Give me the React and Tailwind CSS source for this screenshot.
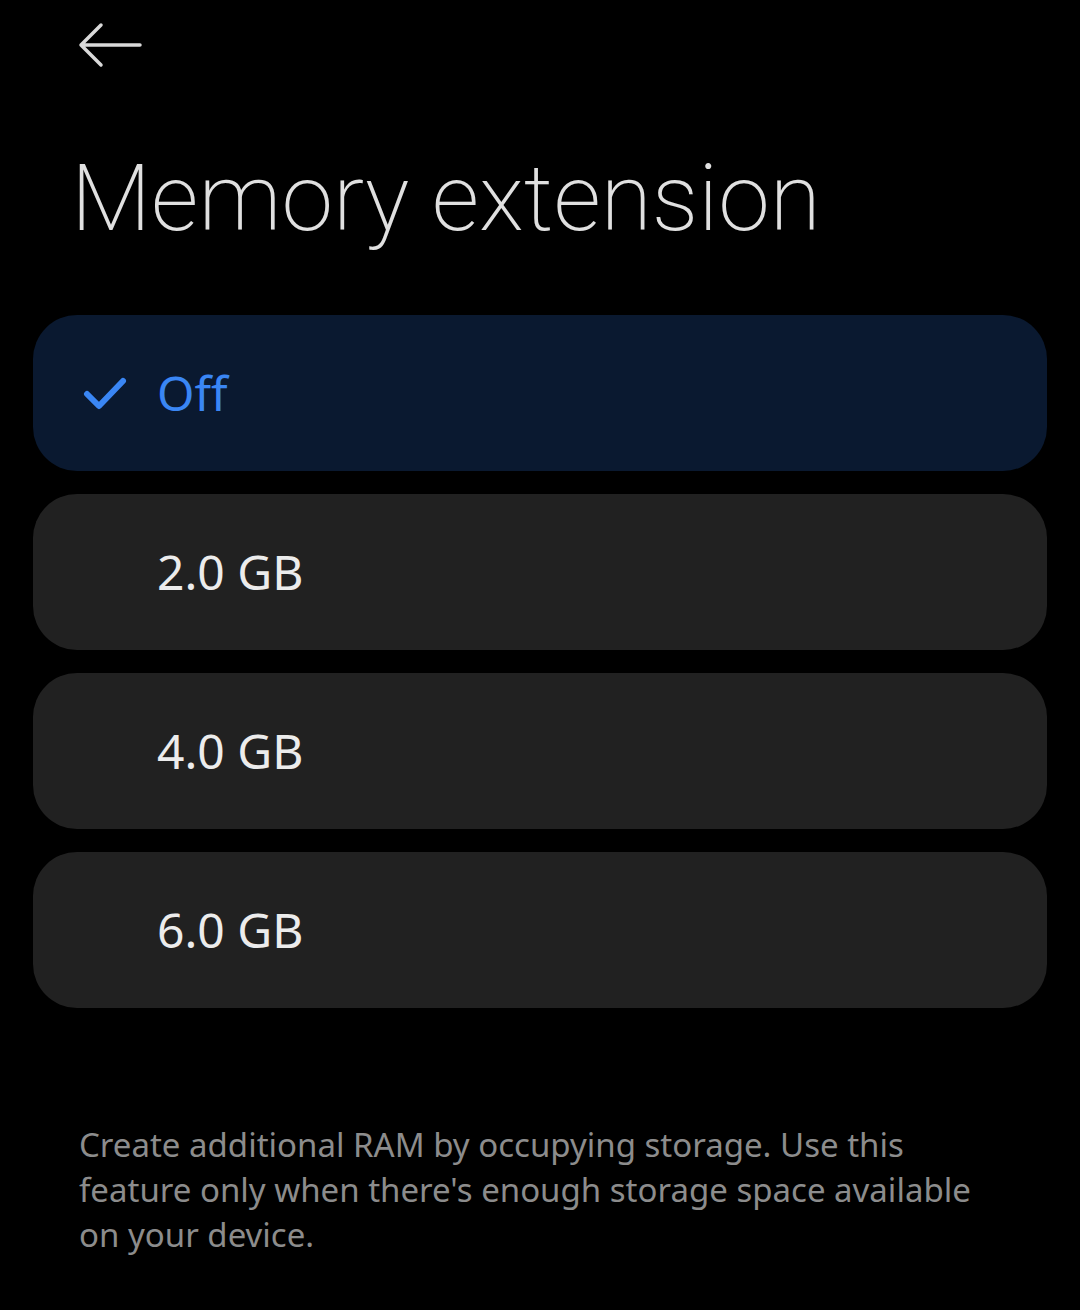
import React, { useState } from "react";

const options = ["Off", "2.0 GB", "4.0 GB", "6.0 GB"];

const BackArrow = () => (
  <svg width="66" height="46" viewBox="0 0 66 46" fill="none">
    <path
      d="M23 3 L3 23 L23 43 M3 23 L62 23"
      stroke="#d9d9d9"
      strokeWidth="3.5"
      strokeLinecap="round"
      strokeLinejoin="round"
    />
  </svg>
);

const Check = () => (
  <svg width="44" height="36" viewBox="0 0 44 36" fill="none">
    <path
      d="M4 19 L16 31 L40 6"
      stroke="#3a86f4"
      strokeWidth="6"
      strokeLinecap="round"
      strokeLinejoin="round"
    />
  </svg>
);

export default function App() {
  const [selected, setSelected] = useState(0);

  return (
    <div
      className="min-h-[1310px] w-[1080px] bg-black"
      style={{ fontFamily: '"Noto Sans", "Open Sans", sans-serif' }}
    >
      <div className="pl-[78px] pt-[22px]">
        <BackArrow />
      </div>

      <h1
        className="ml-[71px] mt-[84px] text-[93px] font-extralight leading-none text-[#e0e0e0]"
        style={{ fontFamily: 'Roboto, "Noto Sans", sans-serif' }}
      >
        Memory extension
      </h1>

      <div className="mx-[33px] mt-[70px] flex flex-col gap-[23px]">
        {options.map((opt, i) => {
          const on = selected === i;
          return (
            <button
              key={opt}
              onClick={() => setSelected(i)}
              className={`flex h-[156px] items-center rounded-[44px] pl-[50px] text-left ${
                on ? "bg-[#0a1930]" : "bg-[#212121]"
              }`}
            >
              <span className="flex w-[74px] items-center">{on && <Check />}</span>
              <span
                className={`text-[48px] leading-none ${
                  on ? "text-[#3a86f4]" : "text-[#ececec]"
                }`}
              >
                {opt}
              </span>
            </button>
          );
        })}
      </div>

      <p className="mx-[79px] mt-[114px] text-[33px] leading-[45px] text-[#8c8c8c]">
        Create additional RAM by occupying storage. Use this
        <br />
        feature only when there's enough storage space available
        <br />
        on your device.
      </p>
    </div>
  );
}
